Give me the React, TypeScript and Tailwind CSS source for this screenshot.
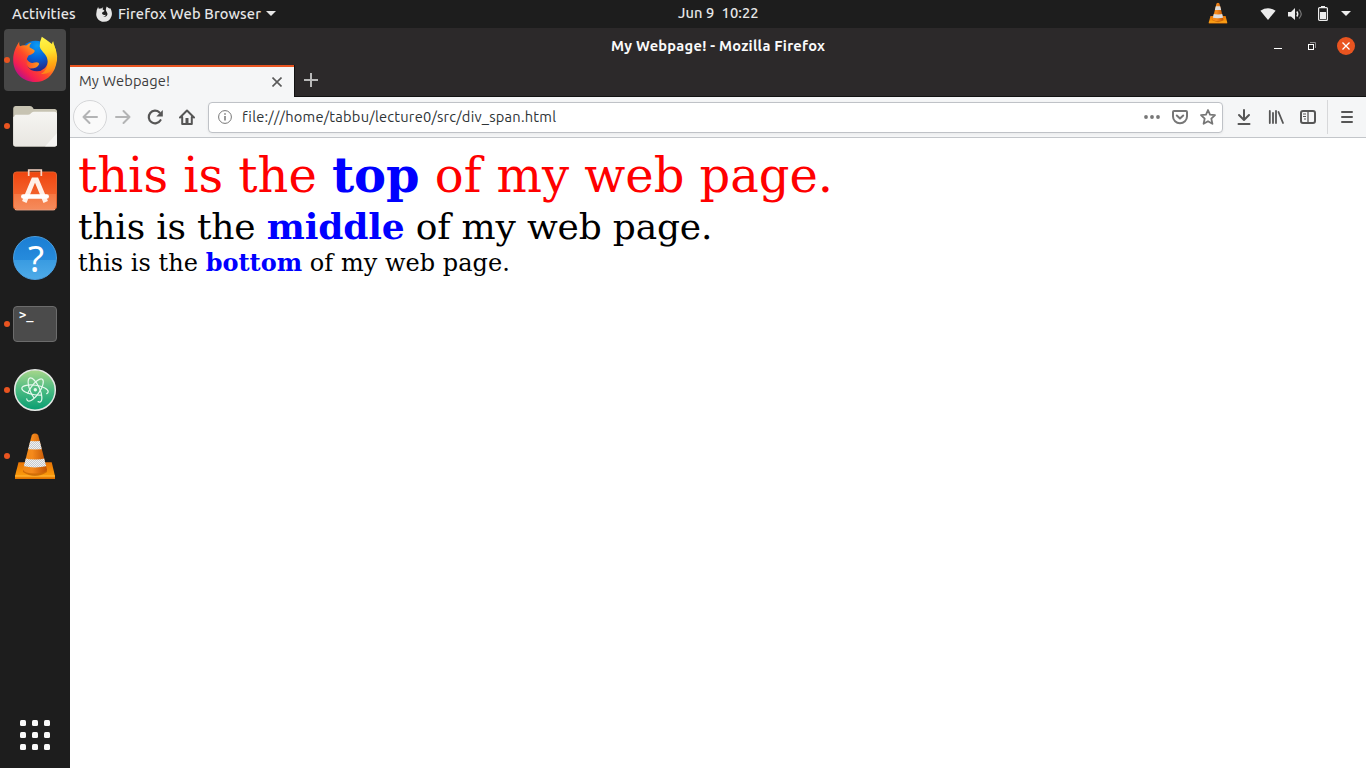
import React from "react";

const Cone = ({ className }: { className: string }) => (
  <svg className={className} viewBox="0 0 48 48">
    <defs>
      <linearGradient id="cone" x1="0" x2="1">
        <stop offset="0" stopColor="#f08a16" />
        <stop offset=".4" stopColor="#f58a1c" />
        <stop offset="1" stopColor="#b84a00" />
      </linearGradient>
      <linearGradient id="base" x1="0" x2="0" y1="0" y2="1">
        <stop offset="0" stopColor="#e87404" />
        <stop offset=".8" stopColor="#fb9b0c" />
        <stop offset="1" stopColor="#d96c00" />
      </linearGradient>
      <pattern id="band" width="2" height="2" patternUnits="userSpaceOnUse">
        <path d="M0 0h2v2H0z" fill="#f1f1f1" />
        <path d="M0 0h1v1H0zM1 1h1v1H1z" fill="#c6cacd" />
      </pattern>
      <clipPath id="coneShape">
        <path d="M20.800 3Q24 .2 27.200 3L36 37.500Q35 41.500 24 41.500T12 37.500Z" />
      </clipPath>
    </defs>
    <path d="M7.500 30.300h33.200L44 44v3H4v-3Z" fill="url(#base)" />
    <path d="M4 44h40" stroke="#ffb83c" strokeWidth="1" />
    <path d="M12 37q12 8 24 0v3q-12 8-24 0Z" fill="#a94600" opacity=".5" />
    <g clipPath="url(#coneShape)">
      <path d="M10 0h28v44H10z" fill="url(#cone)" />
      <path d="M10 8q14 2.500 28 0v8q-14 3-28 0Z" fill="url(#band)" />
      <path d="M10 25q14 5 28 0v8.500q-14 4-28 0Z" fill="url(#band)" />
    </g>
  </svg>
);

const Firefox = () => (
  <svg className="size-12" viewBox="0 0 48 48">
    <defs>
      <linearGradient id="fxBody" x1=".85" y1=".1" x2=".1" y2=".85">
        <stop offset="0" stopColor="#ffd52a" />
        <stop offset=".3" stopColor="#ff9a1c" />
        <stop offset=".55" stopColor="#ff4a28" />
        <stop offset=".8" stopColor="#f51f50" />
        <stop offset="1" stopColor="#b5108c" />
      </linearGradient>
      <radialGradient id="fxGlobe" cx=".55" cy=".15" r=".9">
        <stop offset="0" stopColor="#0a9cf5" />
        <stop offset=".45" stopColor="#0562d8" />
        <stop offset="1" stopColor="#30186e" />
      </radialGradient>
      <linearGradient id="fxArm" x1="0" x2="1">
        <stop offset="0" stopColor="#ff4a28" />
        <stop offset="1" stopColor="#ff9a1c" />
      </linearGradient>
      <linearGradient id="fxFlame" x1=".4" y1="0" x2=".5" y2="1">
        <stop offset="0" stopColor="#fff44a" />
        <stop offset=".4" stopColor="#ffe02c" />
        <stop offset=".75" stopColor="#ffa812" />
        <stop offset="1" stopColor="#ff7c1c" />
      </linearGradient>
    </defs>
    <circle cx="24.500" cy="20.500" r="15.800" fill="url(#fxGlobe)" />
    <path d="M8.300 5.500C8 7.500 8.300 8.700 9 10.200Q12 8.800 15.300 9.500Q18 6.800 20.500 6.700Q18.500 8.500 18.500 11.300L22.800 13.700Q24 14 23.600 15.600Q22.500 18 17.500 19.600L16 22.500Q15 31 20 34Q28 37.500 34 32Q37.500 28 36.500 22L43 9Q48 20 45 29C42 40 34 46 24.500 46C11 46 2.200 36 2.200 24C2.200 16 5 10.500 8.300 5.500Z" fill="url(#fxBody)" />
    <path d="M16 23.500Q19 28 23.500 26.500Q28 25.500 28.200 28Q26.500 32.500 19 32.500Q14 29 16 23.500Z" fill="url(#fxArm)" />
    <path d="M30.800.7Q28.500 6 28.700 10.500C30 16 36.500 18 37 26Q37 34 30 38Q40 38.500 43.500 31Q48 21 43 8.500L42.200 5.300Q41.200 6 41 8Q36 4 30.800.7Z" fill="url(#fxFlame)" />
  </svg>
);

const Files = () => (
  <svg className="size-12" viewBox="0 0 48 48">
    <defs>
      <linearGradient id="folder" x2="0" y2="1">
        <stop stopColor="#f6f5f2" />
        <stop offset="1" stopColor="#e8e6e1" />
      </linearGradient>
    </defs>
    <path d="M4.500 4h14.500q2 0 3 1.800l.6 1.200H43.500q2.500 0 2.500 2.500V42q0 2.500-2.500 2.500H4.500Q2.200 44.500 2.200 42V6.500Q2.200 4 4.500 4Z" fill="#c7c3b2" />
    <path d="M3.500 14.200q0-1.400 1.500-1.400H17q1.500 0 2.500-1l1-1q1-1 2.500-1h20.500q2.500 0 2.500 2.500V42q0 2.500-2.500 2.500H4.500Q2.200 44.500 2.200 42V15Z" fill="url(#folder)" />
    <path d="M46 31V42q0 2.500-2.500 2.500H34Z" fill="#fff" opacity=".55" />
  </svg>
);

const Software = () => (
  <svg className="size-12" viewBox="0 0 48 48">
    <defs>
      <linearGradient id="bag" x2="0" y2="1">
        <stop stopColor="#f0450f" />
        <stop offset=".59" stopColor="#f2622c" />
        <stop offset=".6" stopColor="#f47843" />
        <stop offset="1" stopColor="#f58b5c" />
      </linearGradient>
    </defs>
    <rect x="2.500" y="4" width="43" height="37.500" rx="3" fill="url(#bag)" stroke="#e0622f" />
    <path d="M4 41.500q1 .4 2 .4h36q1 0 2-.4" fill="none" stroke="#fab394" />
    <path d="M17.700 8V2h12.600v6" fill="none" stroke="#f9d5c4" strokeWidth="1.700" />
    <path d="M13.300 34L22.500 12h3L34.700 34" fill="none" stroke="#fff0e8" strokeWidth="4.800" />
    <path d="M12.300 28.500h23.400" stroke="#fff" strokeWidth="4.600" strokeLinecap="round" />
  </svg>
);

const Help = () => (
  <div className="flex size-11 items-center justify-center rounded-full border border-[#4b9fe0] bg-[linear-gradient(#1b7ed4_0%,#268bdc_54%,#399be1_55%,#4eabe8_100%)] pb-[2px] pl-[2px] font-['Noto_Sans'] text-[37px] leading-none text-white">
    ?
  </div>
);

const Terminal = () => (
  <div className="h-9 w-11 rounded-[4px] border border-[#6c6c6c] bg-[#4b4b4b] pt-[2px] pl-[5px] font-['DejaVu_Sans_Mono'] text-[12px] leading-[12px] font-bold text-white">
    &gt;_
  </div>
);

const Atom = () => (
  <svg className="size-12" viewBox="0 0 48 48">
    <defs>
      <linearGradient id="atom" x2="0" y2="1">
        <stop stopColor="#a9d78b" />
        <stop offset=".5" stopColor="#4bbb82" />
        <stop offset="1" stopColor="#079d72" />
      </linearGradient>
    </defs>
    <circle cx="24" cy="24" r="20.300" fill="url(#atom)" stroke="#e4e8e5" strokeWidth="1.500" />
    <g fill="none" stroke="#e5f8ed" strokeWidth="1.200" strokeLinecap="round">
      <ellipse cx="24" cy="24" rx="13.300" ry="4.800" pathLength="100" strokeDasharray="90 10" strokeDashoffset="-14" transform="rotate(8 24 24)" />
      <ellipse cx="24" cy="24" rx="13" ry="4.800" pathLength="100" strokeDasharray="90 10" strokeDashoffset="-14" transform="rotate(66 24 24)" />
      <ellipse cx="24" cy="24" rx="13" ry="4.800" pathLength="100" strokeDasharray="90 10" strokeDashoffset="-64" transform="rotate(-56 24 24)" />
    </g>
    <circle cx="24.300" cy="23.800" r="1.700" fill="#e5f8ed" />
  </svg>
);

const dock = [
  { icon: <Firefox />, running: true, active: true },
  { icon: <Files />, running: true },
  { icon: <Software />, running: false },
  { icon: <Help />, running: false },
  { icon: <Terminal />, running: true },
  { icon: <Atom />, running: true },
  { icon: <Cone className="size-12" />, running: true },
];

const TopBar = () => (
  <header className="flex h-7 shrink-0 items-center bg-[#1d1d1d] text-[14.667px] leading-7 font-medium text-[#e6e6e6]">
    <div className="flex w-[678px] items-center pl-3">
      <span className="w-[84px] tracking-[0.15px]">Activities</span>
      <svg className="-mt-px size-4" viewBox="0 0 16 16" fill="#e6e6e6">
        <path d="M2.200.8Q2.200 2 2.800 2.700Q4 2.300 5.300 2.500Q6 1.500 7.300 1.500Q6.500 2.300 6.700 3.500L8 4.200Q8.600 4.500 8.200 5.200L6.200 6.500L6 7.500Q6.700 9.200 8.600 8.900L9.900 8.800Q9.500 10.500 7.200 10.700Q10 11.300 11 9.400Q12 7.800 10.700 6.100Q9 3.800 10.700.4Q12 1.500 14.200 2.700L14.400 2L15.200 4Q16.500 7.500 15.500 10.300Q13.500 15.800 8 15.800C2.500 15.800.2 11.500.2 8.200Q.2 4 2.200.8Z" />
      </svg>
      <span className="ml-[6px] w-[143px] whitespace-nowrap tracking-[0.14px]">Firefox Web Browser</span>
      <svg className="-mt-px ml-[5px] h-[5px] w-[10px]" viewBox="0 0 10 5" fill="#e6e6e6"><path d="M0 0h10L5 5Z" /></svg>
    </div>
    <span className="-mt-0.5 w-[81px] tracking-[0.1px] whitespace-pre">Jun 9  10:22</span>
    <div className="-mt-px flex flex-1 items-center justify-end pr-[15px]">
      <Cone className="mr-[31px] -mt-px size-[22px]" />
      <svg className="mr-[12px] h-3 w-4" viewBox="0 0 16 12" fill="#ececec"><path d="M.4 2.700Q8-2 15.600 2.700L8 12Z" /></svg>
      <svg className="mr-[15px] h-3 w-[15px]" viewBox="0 0 15 12">
        <path d="M0 4h3L7 0v12L3 8.500H0Z" fill="#ececec" />
        <path d="M8.800 3.500q1.900 2.500 0 5" fill="none" stroke="#ececec" strokeWidth="1.400" />
        <path d="M11 1.500q4.500 4.500 0 9" fill="none" stroke="#777" strokeWidth="1.200" />
      </svg>
      <svg className="-mt-px mr-[13px] h-[15px] w-[10px]" viewBox="0 0 10 15" fill="#ececec">
        <path d="M3 0h4v2H3zM2 6h6v7H2z" />
        <rect x=".6" y="1.600" width="8.800" height="12.800" rx="1" fill="none" stroke="#ececec" strokeWidth="1.200" />
      </svg>
      <svg className="h-[5px] w-[10px]" viewBox="0 0 10 5" fill="#ececec"><path d="M0 0h10L5 5Z" /></svg>
    </div>
  </header>
);

const Dock = () => (
  <nav className="flex w-[70px] shrink-0 flex-col justify-between bg-[#1d1d1d] pt-px pb-[18px]">
    <div className="flex flex-col gap-1">
      {dock.map((d, i) => (
        <div key={i} className="flex h-[62px] items-center">
          <div className="flex w-1 shrink-0">
            {d.running && <span className="relative left-1 z-10 size-[6px] shrink-0 rounded-full bg-[#e95420]" />}
          </div>
          <div className={d.active ? "flex size-[62px] items-center justify-center rounded-[4px] bg-[#474747]" : "flex size-[62px] items-center justify-center"}>
            {d.icon}
          </div>
        </div>
      ))}
    </div>
    <div className="grid grid-cols-[6px_6px_6px] gap-[6px] pl-5">
      {Array.from({ length: 9 }, (_, i) => (
        <span key={i} className="size-[6px] rounded-[1.5px] bg-[#f6f6f6]" />
      ))}
    </div>
  </nav>
);

const TitleBar = () => (
  <div className="flex h-[37px] items-center bg-[#2c292a]">
    <span className="-mt-px ml-[541px] w-[216px] text-[14.667px] leading-5 font-bold tracking-[0.24px] whitespace-nowrap text-[#fafafa]">My Webpage! - Mozilla Firefox</span>
    <div className="-mt-px flex flex-1 items-center justify-end pr-[11px]">
      <span className="mt-[5px] mr-[26px] h-px w-2 bg-white" />
      <svg className="mr-[21px] h-[9px] w-[8px]" viewBox="0 0 8 9" fill="none">
        <path d="M2 .5h5.500V6" stroke="#8d8b8c" />
        <rect x=".5" y="2.500" width="5" height="5" stroke="#fff" />
      </svg>
      <span className="flex size-[18px] items-center justify-center rounded-full bg-[#e95420]">
        <svg className="size-2" viewBox="0 0 8 8" stroke="#fff" strokeWidth="1.300"><path d="M.5.5l7 7M7.500.5l-7 7" /></svg>
      </span>
    </div>
  </div>
);

const Tabs = () => (
  <div className="flex h-8 bg-[#2c292a]">
    <div className="flex w-[224px] items-center justify-between border-t-2 border-[#e95420] bg-[#f5f6f7] pr-[12px] pl-[9px]">
      <span className="mb-[2px] text-[14.667px] leading-5 tracking-[0.12px] whitespace-nowrap text-[#3d3d3d]">My Webpage!</span>
      <svg className="mb-px size-[10px]" viewBox="0 0 10 10" stroke="#5a5a5a" strokeWidth="1.600"><path d="M.5.5l9 9M9.500.5l-9 9" /></svg>
    </div>
    <div className="flex flex-1 items-center border-b border-l border-[#121212] pl-[9px]">
      <svg className="-mt-px size-[14px]" viewBox="0 0 14 14" stroke="#b9b9b9" strokeWidth="2"><path d="M7 0v14M0 7h14" /></svg>
    </div>
  </div>
);

const Toolbar = () => (
  <div className="flex h-[41px] items-center border-b border-[#c3c6ca] bg-[#f5f6f7] pl-[3px] text-[#565656]">
    <span className="flex size-[34px] shrink-0 items-center justify-center rounded-full border border-[#d5d6d8] bg-[#fafafa]">
      <svg className="size-4" viewBox="0 0 16 16" fill="none" stroke="#b3b4b5" strokeWidth="2" strokeLinecap="round" strokeLinejoin="round"><path d="M15 8H1.500M7.500 2l-6 6 6 6" /></svg>
    </span>
    <svg className="ml-2 size-4 shrink-0" viewBox="0 0 16 16" fill="none" stroke="#b3b4b5" strokeWidth="2" strokeLinecap="round" strokeLinejoin="round"><path d="M1 8h13.500M8.500 2l6 6-6 6" /></svg>
    <svg className="ml-4 size-4 shrink-0" viewBox="0 0 16 16" fill="none" stroke="currentColor" strokeWidth="2.200" strokeLinecap="round"><path d="M13.500 11.200A6.300 6.300 0 1 1 12.500 3.500" /><path d="M15.800 1v6.500H9.300Z" fill="currentColor" stroke="none" /></svg>
    <svg className="ml-4 size-4 shrink-0" viewBox="0 0 16 16" fill="none" stroke="currentColor" strokeWidth="2" strokeLinecap="round" strokeLinejoin="round"><path d="M1 8.500L8 1.500l7 7M3.200 8v7h9.600V8" /><path d="M6.500 9h3v5h-3z" fill="currentColor" stroke="none" /></svg>
    <div className="ml-[13px] flex h-[31px] w-[1015px] shrink-0 items-center rounded-[4px] border border-[#bfc2c7] bg-white pr-[6px] pl-[9px] shadow-[0_1px_3px_rgba(0,0,0,0.06)]">
      <svg className="size-[14px]" viewBox="0 0 14 14" fill="none" stroke="#777"><circle cx="7" cy="7" r="6.400" /><path d="M7 6v4.500M7 3.300v1.500" strokeWidth="1.500" /></svg>
      <span className="ml-[10px] flex-1 text-[14.667px] leading-5 tracking-[0.22px] whitespace-nowrap text-[#2e3436]">file:///home/tabbu/lecture0/src/div_span.html</span>
      <svg className="h-4 w-4" viewBox="0 0 16 16" fill="#777"><circle cx="2" cy="8" r="1.900" /><circle cx="8" cy="8" r="1.900" /><circle cx="14" cy="8" r="1.900" /></svg>
      <svg className="ml-3 size-4" viewBox="0 0 16 16" fill="none" stroke="#777" strokeWidth="2" strokeLinecap="round" strokeLinejoin="round"><path d="M2 2h12q1 0 1 1v4.500a7 6.700 0 0 1-14 0V3q0-1 1-1Z" /><path d="M4.800 6.500L8 9.500l3.200-3" /></svg>
      <svg className="ml-3 size-4" viewBox="0 0 16 16" fill="none" stroke="#777" strokeWidth="1.800" strokeLinejoin="round"><path d="M8 1l2 4.600 5 .5-3.700 3.500 1.100 5.200L8 12.200l-4.400 2.600 1.100-5.200L1 6.100l5-.5Z" /></svg>
    </div>
    <svg className="ml-[13px] size-4 shrink-0" viewBox="0 0 16 16" fill="none" stroke="currentColor" strokeWidth="2" strokeLinecap="round" strokeLinejoin="round"><path d="M8 1v9.500M3 6l5 5 5-5M2.500 15h11" /></svg>
    <svg className="ml-4 size-4 shrink-0" viewBox="0 0 16 16" fill="none" stroke="currentColor" strokeWidth="1.800" strokeLinecap="round"><path d="M1.800 2v12M5 4v10M8 2v12M10.500 3l4.500 11" /></svg>
    <svg className="ml-4 size-4 shrink-0" viewBox="0 0 16 16" fill="none" stroke="currentColor" strokeWidth="2"><rect x="1" y="2" width="14" height="12" rx="2" /><path d="M8 2v12" strokeWidth="1.300" /><path d="M3 5h3M3 7.500h3M4 10h2" strokeWidth="1" /></svg>
    <span className="ml-[11px] h-[34px] w-px bg-[#d7d8da]" />
    <svg className="ml-[12px] size-[14px] shrink-0" viewBox="0 0 14 14" stroke="currentColor" strokeWidth="2" strokeLinecap="round"><path d="M2 2h10M2 7h10M2 12h10" /></svg>
  </div>
);

export default function App() {
  return (
    <div className="flex h-screen w-screen flex-col overflow-hidden font-['Ubuntu','Noto_Sans',sans-serif]">
      <TopBar />
      <div className="flex min-h-0 flex-1">
        <Dock />
        <section className="flex min-w-0 flex-1 flex-col bg-white">
          <TitleBar />
          <Tabs />
          <Toolbar />
          <main className="p-2 font-['DejaVu_Serif',serif] text-black">
            <div className="text-[48px] leading-[58px] tracking-[-0.05px] text-[#ff0000]">this is the <span className="font-bold text-[#0000ff]">top</span> of my web page.</div>
            <div className="text-[36px] leading-[44px] tracking-[-0.18px]">this is the <span className="font-bold text-[#0000ff]">middle</span> of my web page.</div>
            <div className="text-[24px] leading-7 tracking-[0.03px]">this is the <span className="font-bold text-[#0000ff]">bottom</span> of my web page.</div>
          </main>
        </section>
      </div>
    </div>
  );
}
